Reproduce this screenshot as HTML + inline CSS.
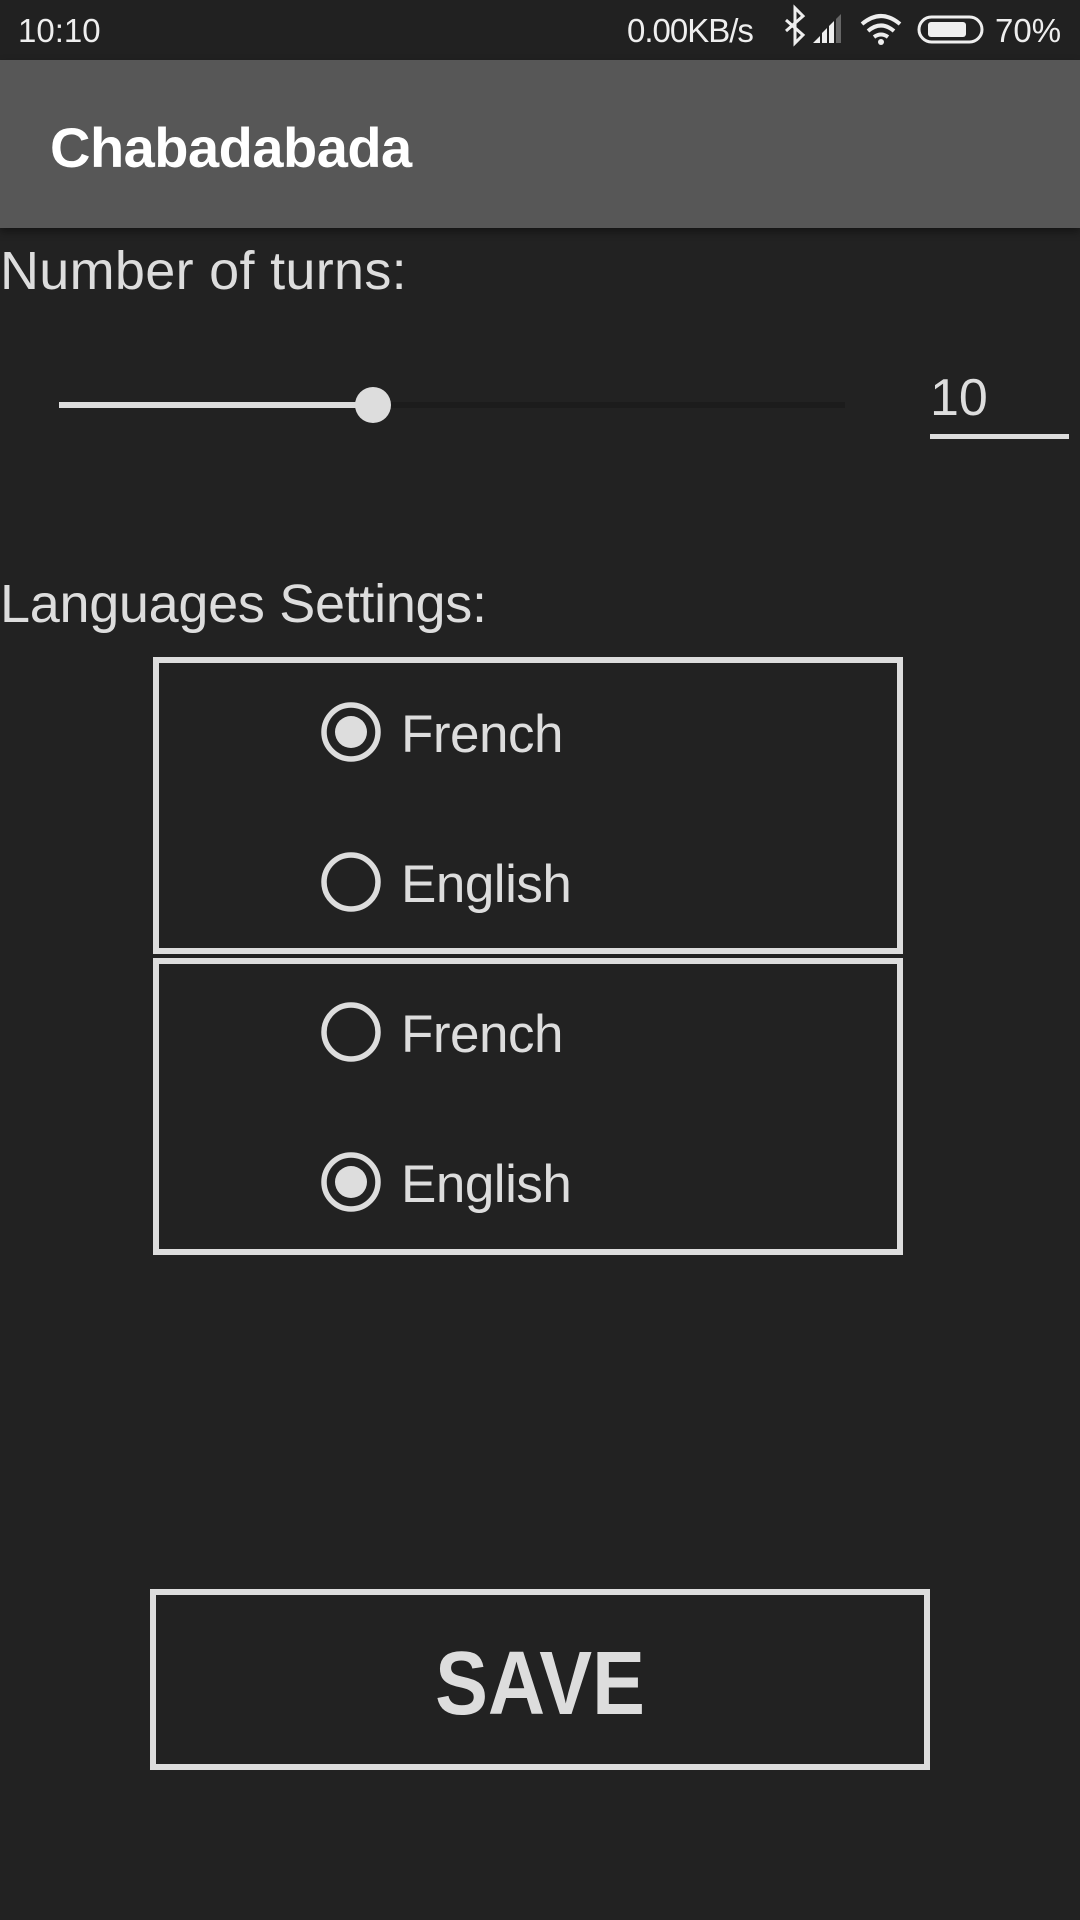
<!DOCTYPE html>
<html><head><meta charset="utf-8"><style>
*{margin:0;padding:0;box-sizing:border-box}
body{width:1080px;height:1920px;background:#222;position:relative;overflow:hidden;font-family:"Liberation Sans",sans-serif;color:#ddd}
.a{position:absolute;white-space:nowrap;line-height:1}
</style></head><body>
<div class="a" style="left:0;top:0;width:1080px;height:60px;background:#212121"></div>
<div class="a" style="left:18px;top:14px;font-size:33px;color:#eee">10:10</div>
<div class="a" style="left:627px;top:14px;font-size:33px;color:#eee;letter-spacing:-1px">0.00KB/s</div>
<svg class="a" style="left:780px;top:0" width="300" height="60" viewBox="0 0 300 60">
<path d="M6 20 L23 35 L15 43 L15 8 L23 16 L6 31" fill="none" stroke="#eee" stroke-width="3"/>
<path d="M33 43 L40 36 L40 43Z M42 43 L42 33 L47 28 L47 43Z M49 43 L49 26 L54 21 L54 43Z" fill="#eee"/>
<path d="M56 19 L61 14 L61 43 L56 43Z" fill="#666"/>
<path d="M82 24 Q101 8 120 24" fill="none" stroke="#eee" stroke-width="4"/>
<path d="M88 31 Q101 20 114 31" fill="none" stroke="#eee" stroke-width="4"/>
<path d="M94 37 Q101 32 108 37" fill="none" stroke="#eee" stroke-width="4"/>
<circle cx="101" cy="42" r="3" fill="#eee"/>
<rect x="139" y="17" width="63" height="25" rx="12.5" fill="none" stroke="#eee" stroke-width="3"/>
<rect x="148" y="22" width="38" height="15" rx="3" fill="#eee"/>
</svg>
<div class="a" style="left:995px;top:14px;font-size:33px;color:#eee">70%</div>
<div class="a" style="left:0;top:60px;width:1080px;height:168px;background:#575757;box-shadow:0 4px 8px rgba(0,0,0,.4)"></div>
<div class="a" style="left:50px;top:120px;font-size:56px;font-weight:bold;color:#fff;letter-spacing:-0.5px">Chabadabada</div>
<div class="a" style="left:0;top:244px;font-size:54px;letter-spacing:0.3px">Number of turns:</div>
<div class="a" style="left:59px;top:402px;width:786px;height:6px;background:#1c1c1c"></div>
<div class="a" style="left:59px;top:402px;width:314px;height:6px;background:#ddd"></div>
<div class="a" style="left:355px;top:387px;width:36px;height:36px;border-radius:50%;background:#ddd"></div>
<div class="a" style="left:930px;top:372px;font-size:52px">10</div>
<div class="a" style="left:930px;top:434px;width:139px;height:5px;background:#ddd"></div>
<div class="a" style="left:0;top:577px;font-size:54px;letter-spacing:-0.3px">Languages Settings:</div>
<div class="a" style="left:153px;top:657px;width:750px;height:297px;border:6px solid #ddd"></div>
<div class="a" style="left:153px;top:958px;width:750px;height:297px;border:6px solid #ddd"></div>
<svg class="a" style="left:316px;top:697px" width="70" height="520" viewBox="0 0 70 520">
<g fill="none" stroke="#ddd" stroke-width="5.5">
<circle cx="35" cy="35" r="27"/><circle cx="35" cy="185" r="27"/><circle cx="35" cy="335" r="27"/><circle cx="35" cy="485" r="27"/></g>
<circle cx="35" cy="35" r="16" fill="#ddd"/><circle cx="35" cy="485" r="16" fill="#ddd"/>
</svg>
<div class="a" style="left:401px;top:708px;font-size:53px;letter-spacing:-0.5px">French</div>
<div class="a" style="left:401px;top:858px;font-size:53px;letter-spacing:-0.5px">English</div>
<div class="a" style="left:401px;top:1008px;font-size:53px;letter-spacing:-0.5px">French</div>
<div class="a" style="left:401px;top:1158px;font-size:53px;letter-spacing:-0.5px">English</div>
<div class="a" style="left:150px;top:1589px;width:780px;height:181px;border:6px solid #ddd"></div>
<div class="a" style="left:150px;top:1639px;width:780px;text-align:center;font-size:90px;font-weight:bold;transform:scaleX(0.88)">SAVE</div>
</body></html>
